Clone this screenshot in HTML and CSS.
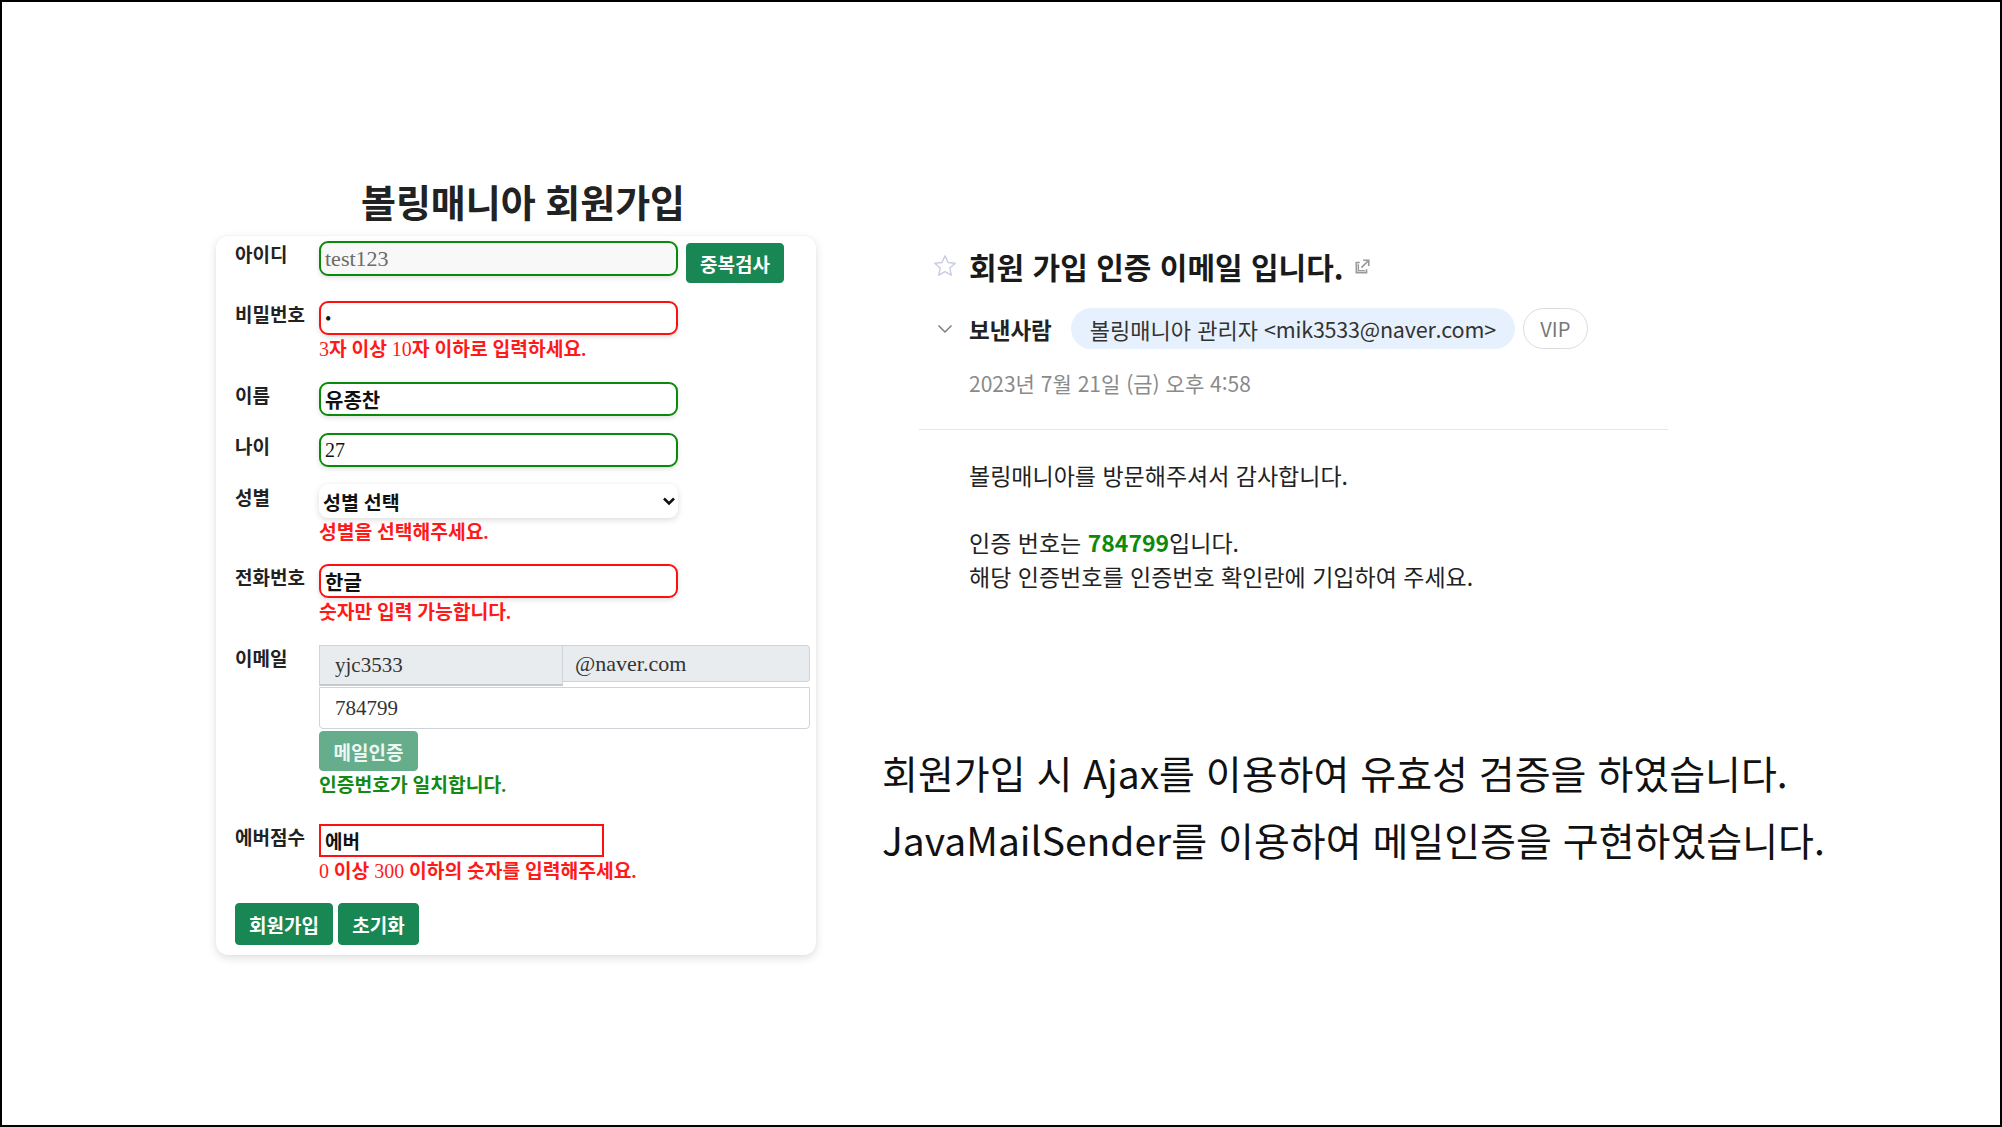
FILE: index.html
```html
<!DOCTYPE html>
<html lang="ko">
<head>
<meta charset="utf-8">
<title>볼링매니아 회원가입</title>
<link rel="stylesheet" href="styles.css">
</head>
<body>
<div class="frame">
  <section class="left">
    <h2 class="title">볼링매니아 회원가입</h2>
    <div class="card">
      <div class="row mb18">
        <div class="label">아이디</div>
        <div class="field inline">
          <div class="box round ok readonly w-main">test123</div>
          <button class="btn btn-dup">중복검사</button>
        </div>
      </div>
      <div class="row mb18">
        <div class="label">비밀번호</div>
        <div class="field">
          <div class="box round bad w-main"><span class="dot">•</span></div>
          <div class="msg err"><span class="lat">3</span>자 이상 <span class="lat">10</span>자 이하로 입력하세요.</div>
        </div>
      </div>
      <div class="row">
        <div class="label">이름</div>
        <div class="field">
          <div class="box round ok w-main ko">유종찬</div>
        </div>
      </div>
      <div class="row">
        <div class="label">나이</div>
        <div class="field">
          <div class="box round ok w-main">27</div>
        </div>
      </div>
      <div class="row">
        <div class="label">성별</div>
        <div class="field">
          <div class="box select w-main ko">
            <span>성별 선택</span>
            <svg class="sel-arrow" width="14" height="10" viewBox="0 0 14 10"><path d="M2 2.5 L7 7.5 L12 2.5" fill="none" stroke="#111" stroke-width="2.6"/></svg>
          </div>
          <div class="msg err">성별을 선택해주세요.</div>
        </div>
      </div>
      <div class="row mb18">
        <div class="label">전화번호</div>
        <div class="field">
          <div class="box round bad w-main ko">한글</div>
          <div class="msg err">숫자만 입력 가능합니다.</div>
        </div>
      </div>
      <div class="row mb24">
        <div class="label">이메일</div>
        <div class="field">
          <div class="email-group">
            <div class="egroup-box e-left">yjc3533</div>
            <div class="egroup-box e-right">@naver.com</div>
          </div>
          <div class="code-box">784799</div>
          <button class="btn btn-mail">메일인증</button>
          <div class="msg good">인증번호가 일치합니다.</div>
        </div>
      </div>
      <div class="row">
        <div class="label">에버점수</div>
        <div class="field">
          <div class="box square bad ko">에버</div>
          <div class="msg err"><span class="lat">0</span> 이상 <span class="lat">300</span> 이하의 숫자를 입력해주세요.</div>
        </div>
      </div>
      <div class="actions">
        <button class="btn btn-join">회원가입</button>
        <button class="btn btn-reset">초기화</button>
      </div>
    </div>
  </section>

  <section class="right">
    <div class="mail">
      <div class="mail-head">
        <div class="hrow">
          <span class="icon-cell">
            <svg width="26" height="26" viewBox="0 0 24 24"><path d="M12 2.6 L14.8 8.7 L21.4 9.4 L16.4 13.9 L17.8 20.5 L12 17.2 L6.2 20.5 L7.6 13.9 L2.6 9.4 L9.2 8.7 Z" fill="none" stroke="#c9cce0" stroke-width="1.3" stroke-linejoin="round"/></svg>
          </span>
          <h3 class="mail-title">회원 가입 인증 이메일 입니다.</h3>
          <svg class="ext" width="18" height="18" viewBox="0 0 16 16"><path d="M6 4 H3 V13 H12 V10" fill="none" stroke="#9a9a9a" stroke-width="1.5"/><path d="M9 2 H14 V7 M14 2 L7.5 8.5" fill="none" stroke="#9a9a9a" stroke-width="1.5"/><path d="M4.8 5.5 V11.2 H10.5" fill="none" stroke="#9a9a9a" stroke-width="1.2"/></svg>
        </div>
        <div class="hrow sender-row">
          <span class="icon-cell">
            <svg width="16" height="10" viewBox="0 0 16 10"><path d="M1.5 1.5 L8 8 L14.5 1.5" fill="none" stroke="#777" stroke-width="1.4"/></svg>
          </span>
          <span class="sender-label">보낸사람</span>
          <span class="pill">볼링매니아 관리자 <span class="addr">&lt;mik3533@naver.com&gt;</span></span>
          <span class="vip">VIP</span>
        </div>
        <div class="date">2023년 7월 21일 (금) 오후 4:58</div>
      </div>
      <div class="mail-body">
        <p>볼링매니아를 방문해주셔서 감사합니다.</p>
        <p class="blank">&nbsp;</p>
        <p>인증 번호는 <span class="code">784799</span>입니다.</p>
        <p>해당 인증번호를 인증번호 확인란에 기입하여 주세요.</p>
      </div>
    </div>
    <div class="caption">
      <p>회원가입 시 Ajax를 이용하여 유효성 검증을 하였습니다.</p>
      <p>JavaMailSender를 이용하여 메일인증을 구현하였습니다.</p>
    </div>
  </section>
</div>
</body>
</html>
```

FILE: styles.css
```css
html, body {
  margin: 0;
  padding: 0;
  background: #fff;
}

.frame {
  width: 2002px;
  height: 1127px;
  box-sizing: border-box;
  border: 2px solid #000;
  display: flex;
  align-items: flex-start;
  overflow: hidden;
}

/* ---------- left: sign-up form ---------- */
.left {
  margin-left: 214px;
  padding-top: 179px;
  width: 600px;
  font-family: "Liberation Serif", "Noto Sans CJK KR", serif;
  color: #222;
}

.title {
  margin: 0 0 9px;
  font-family: "Liberation Serif", "Noto Sans CJK KR", serif;
  font-size: 38px;
  line-height: 46px;
  font-weight: 700;
  text-align: center;
  color: #222;
  padding-left: 14px;
}

.card {
  box-sizing: border-box;
  width: 600px;
  padding: 5px 4px 10px 19px;
  border-radius: 12px;
  background: #fff;
  box-shadow: 0 3px 10px rgba(0, 0, 0, 0.13), 0 0 2px rgba(0, 0, 0, 0.06);
}

.row {
  display: grid;
  grid-template-columns: 84px 1fr;
  margin-bottom: 17px;
}
.mb18 { margin-bottom: 18px; }
.mb24 { margin-bottom: 24px; }

.label {
  font-family: "Noto Sans CJK KR", sans-serif;
  font-size: 19px;
  font-weight: 700;
  line-height: 25px;
  color: #222;
  white-space: nowrap;
}

.field {
  display: flex;
  flex-direction: column;
  align-items: flex-start;
}
.field.inline {
  flex-direction: row;
  gap: 8px;
}

.box {
  box-sizing: border-box;
  height: 34px;
  display: flex;
  align-items: center;
  padding: 0 4px;
  font-size: 20px;
  color: #111;
  background: #fff;
  box-shadow: 0 2px 5px rgba(0, 0, 0, 0.12);
}
.w-main { width: 359px; }
.round { border-radius: 9px; }
.ok { border: 2px solid #0a8a0a; }
.bad { border: 2px solid #ff1010; }
.readonly {
  background: #f8f8f8;
  color: #6a6a6a;
  height: 35px;
  font-size: 22px;
}
.ko { font-weight: 700; }
.dot { font-size: 18px; padding-top: 3px; }

.select {
  justify-content: space-between;
  border-radius: 9px;
  padding: 0 2px 0 4px;
  font-size: 19.5px;
  box-shadow: 0 2px 6px rgba(0, 0, 0, 0.14);
}
.sel-arrow { display: block; }

.square {
  width: 285px;
  height: 33px;
  border-radius: 0;
  box-shadow: none;
  font-size: 19px;
}

.msg {
  font-family: "Liberation Serif", "Noto Sans CJK KR", serif;
  font-size: 19.3px;
  line-height: 29px;
  font-weight: 700;
}
.msg .lat { font-weight: 400; font-size: 20px; }
.err { color: #ff1a1a; }
.good { color: #138a13; }

.email-group {
  display: flex;
  align-items: flex-start;
  width: 491px;
}
.egroup-box {
  box-sizing: border-box;
  background: #e9ecef;
  border: 1px solid #ced4da;
  font-size: 21px;
  color: #333;
  display: flex;
  align-items: center;
  padding-left: 15px;
}
.e-left {
  width: 244px;
  height: 41px;
  border-bottom: 2px solid #c4c9cf;
}
.e-right {
  width: 247px;
  height: 37px;
  border-left: none;
  padding-left: 12px;
  border-radius: 0 4px 4px 0;
  font-size: 22px;
}
.code-box {
  box-sizing: border-box;
  width: 491px;
  height: 42px;
  margin-top: 1px;
  border: 1px solid #ced4da;
  border-radius: 0 0 4px 4px;
  font-size: 21px;
  color: #333;
  display: flex;
  align-items: center;
  padding-left: 15px;
}

.btn {
  font-family: "Noto Sans CJK KR", sans-serif;
  font-weight: 700;
  font-size: 19px;
  color: #fff;
  background: #198754;
  border: 1px solid #198754;
  border-radius: 4px;
  padding: 0;
  cursor: pointer;
}
.btn-dup {
  width: 98px;
  height: 40px;
  margin-top: 2px;
}
.btn-mail {
  width: 99px;
  height: 40px;
  margin-top: 2px;
  background: #66ad8c;
  border-color: #66ad8c;
  color: #eef6f1;
}
.actions {
  display: flex;
  gap: 5px;
}
.btn-join { width: 98px; height: 42px; }
.btn-reset { width: 81px; height: 42px; }

/* ---------- right: mail + caption ---------- */
.right {
  margin-left: 66px;
  padding-top: 244px;
  font-family: "Noto Sans CJK KR", sans-serif;
  color: #222;
}

.mail {
  margin-left: 37px;
  width: 749px;
}
.mail-head {
  padding-left: 12px;
  padding-bottom: 32px;
  border-bottom: 1px solid #e6e6e6;
}
.hrow {
  display: flex;
  align-items: center;
}
.icon-cell {
  width: 28px;
  margin-right: 10px;
  display: flex;
  justify-content: center;
  align-items: center;
}
.mail-title {
  margin: 0;
  font-size: 30px;
  line-height: 40px;
  font-weight: 700;
  color: #1a1a1a;
}
.ext { margin-left: 9px; margin-top: 2px; }

.sender-row {
  margin-top: 22px;
  height: 41px;
}
.sender-label {
  font-size: 22.5px;
  font-weight: 700;
  color: #222;
  margin-right: 19px;
}
.pill {
  height: 41px;
  box-sizing: border-box;
  display: flex;
  align-items: center;
  padding: 0 19px;
  border-radius: 21px;
  background: #e6f1fd;
  font-size: 22px;
  color: #333;
  white-space: pre;
}
.addr { font-size: 21.5px; letter-spacing: -0.2px; }
.vip {
  margin-left: 8px;
  box-sizing: border-box;
  width: 65px;
  height: 41px;
  border: 1px solid #dcdcdc;
  border-radius: 21px;
  display: flex;
  align-items: center;
  justify-content: center;
  font-size: 20px;
  color: #777;
}
.date {
  margin-top: 20px;
  padding-left: 38px;
  font-size: 21px;
  line-height: 28px;
  color: #8a8a8a;
}

.mail-body {
  padding: 29px 0 0 50px;
}
.mail-body p {
  margin: 0;
  font-size: 23px;
  line-height: 33.5px;
  color: #222;
}
.code { color: #0c8a0c; font-weight: 700; }

.caption {
  margin-top: 146px;
}
.caption p {
  margin: 0;
  font-size: 39px;
  line-height: 67px;
  color: #111;
  white-space: nowrap;
}
```
